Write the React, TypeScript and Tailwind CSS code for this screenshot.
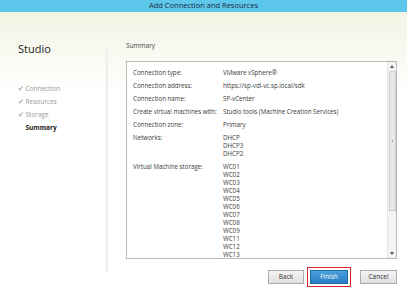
import React from "react";

const rows: { label: string; values: string[] }[] = [
  { label: "Connection type:", values: ["VMware vSphere®"] },
  { label: "Connection address:", values: ["https://sp-vdi-vc.sp.local/sdk"] },
  { label: "Connection name:", values: ["SP-vCenter"] },
  { label: "Create virtual machines with:", values: ["Studio tools (Machine Creation Services)"] },
  { label: "Connection zone:", values: ["Primary"] },
  { label: "Networks:", values: ["DHCP", "DHCP3", "DHCP2"] },
  {
    label: "Virtual Machine storage:",
    values: ["WC01", "WC02", "WC03", "WC04", "WC05", "WC06", "WC07", "WC08", "WC09", "WC11", "WC12", "WC13"],
  },
];

const steps = ["Connection", "Resources", "Storage"];

export default function App() {
  return (
    <div
      className="w-[407px] h-[292px] overflow-hidden flex flex-col bg-white text-[#333]"
      style={{ fontFamily: '"Open Sans", "Noto Sans", sans-serif' }}
    >
      {/* Title bar */}
      <div className="h-[12px] bg-[#5cc6eb] flex items-center justify-center text-[7.5px] leading-none text-[#1d2b3c]">
        Add Connection and Resources
      </div>

      <div className="flex-1 flex bg-gradient-to-b from-[#f2f4e4] via-white via-[30%] to-white">
        {/* Left nav */}
        <div className="w-[106px] pl-[18px] pt-[30px]">
          <div className="text-[11px] leading-[14px] text-[#222]">Studio</div>
          <div className="mt-[29px] flex flex-col gap-[5px] text-[6.5px] leading-[8px] text-[#999]">
            {steps.map((s) => (
              <div key={s} className="flex items-center gap-[1.5px]">
                <span className="w-[6px] text-[#aaa]">✔</span>
                <span>{s}</span>
              </div>
            ))}
            <div className="pl-[7.5px] font-bold text-[#222]">Summary</div>
          </div>
        </div>

        {/* Divider */}
        <div className="mt-[36px] mb-[20px] w-[2px] bg-gradient-to-r from-[#e4e4e4] to-[#f6f6f6]" />

        {/* Content */}
        <div className="flex-1 flex flex-col pl-[18px] pr-[10px] pt-[30px]">
          <div className="text-[6.5px] leading-[8px] text-[#444]">Summary</div>
          <div className="mt-[11px] h-[198px] border border-[#b9b9b9] bg-white flex overflow-hidden">
            <div className="flex-1 pl-[6px] pt-[7px] text-[6.2px] leading-[8px] text-[#3a3a3a]">
              {rows.map((r, i) => (
                <div key={r.label} className={`flex ${i > 0 ? "mt-[5px]" : ""}`}>
                  <div className="w-[90px] shrink-0">{r.label}</div>
                  <div>
                    {r.values.map((v) => (
                      <div key={v} className="whitespace-nowrap">{v}</div>
                    ))}
                  </div>
                </div>
              ))}
            </div>
            {/* Scrollbar */}
            <div className="w-[9px] border-l border-[#e6e6e6] bg-[#f4f4f4] flex flex-col items-center">
              <div className="h-[9px] flex items-center justify-center">
                <svg width="4" height="3" viewBox="0 0 4 3"><path d="M0 3 L2 0 L4 3Z" fill="#555" /></svg>
              </div>
              <div className="w-[7px] h-[140px] bg-[#e8e8e8] border border-[#cfcfcf] flex items-center justify-center">
                <div className="w-[1px] h-[2px] bg-[#999]" />
              </div>
              <div className="flex-1" />
              <div className="h-[9px] flex items-center justify-center">
                <svg width="4" height="3" viewBox="0 0 4 3"><path d="M0 0 L4 0 L2 3Z" fill="#555" /></svg>
              </div>
            </div>
          </div>

          {/* Buttons */}
          <div className="mt-[8px] flex justify-end items-center text-[6.5px] leading-none">
            <button className="w-[36px] h-[14px] border border-[#adadad] bg-gradient-to-b from-[#f4f4f4] to-[#e0e0e0] text-[#333]">
              Back
            </button>
            <div className="ml-[3px] p-[2px] border-[1.5px] border-[#d7262c]">
              <button className="w-[38px] h-[14px] border border-[#1e6bab] bg-gradient-to-b from-[#4aa0dc] to-[#2a7bc0] text-white">
                Finish
              </button>
            </div>
            <button className="ml-[9px] w-[37px] h-[14px] border border-[#adadad] bg-gradient-to-b from-[#f4f4f4] to-[#e0e0e0] text-[#333]">
              Cancel
            </button>
          </div>
        </div>
      </div>
    </div>
  );
}
